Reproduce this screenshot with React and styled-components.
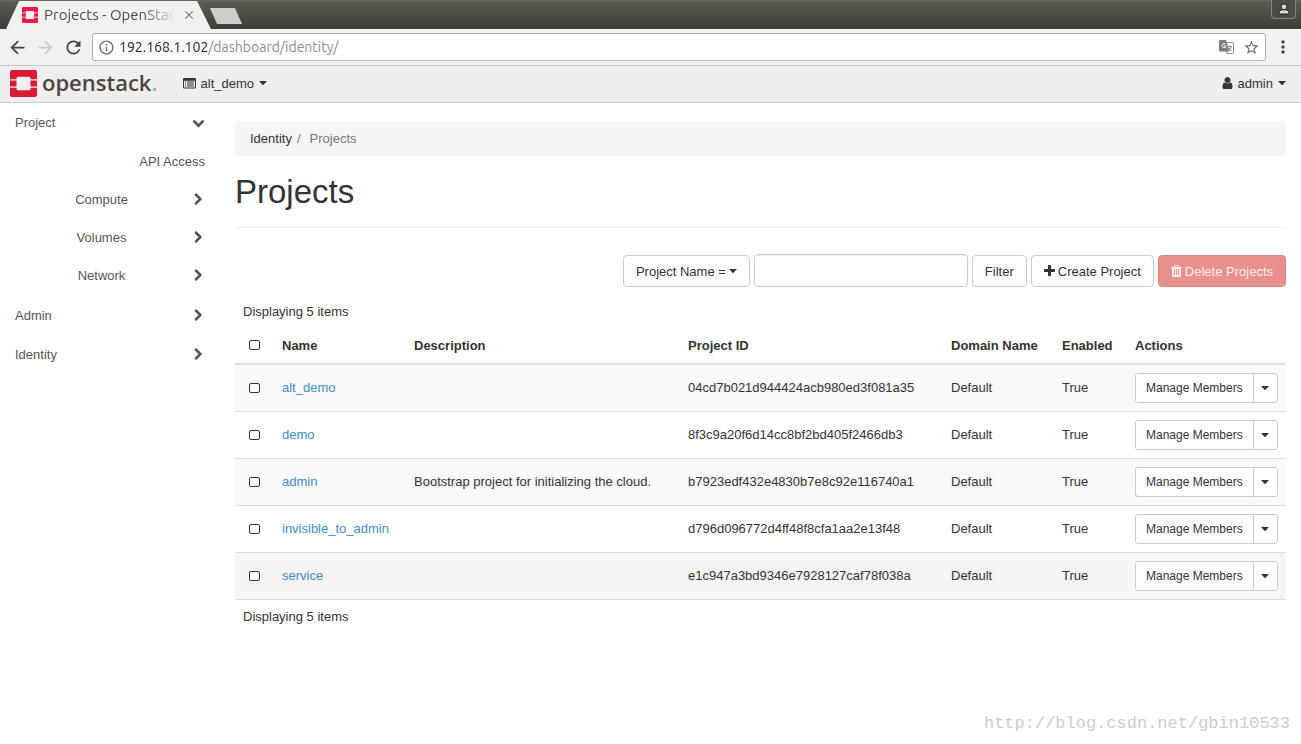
import React from "react";
import styled, { createGlobalStyle, css } from "styled-components";
import {
  MdArrowBack,
  MdArrowForward,
  MdClose,
  MdInfoOutline,
  MdMoreVert,
  MdRefresh,
  MdStarBorder,
} from "react-icons/md";

const projects = [
  { name: "alt_demo", description: "", id: "04cd7b021d944424acb980ed3f081a35" },
  { name: "demo", description: "", id: "8f3c9a20f6d14cc8bf2bd405f2466db3" },
  {
    name: "admin",
    description: "Bootstrap project for initializing the cloud.",
    id: "b7923edf432e4830b7e8c92e116740a1",
  },
  { name: "invisible_to_admin", description: "", id: "d796d096772d4ff48f8cfa1aa2e13f48" },
  { name: "service", description: "", id: "e1c947a3bd9346e7928127caf78f038a", active: true },
];

const GlobalStyle = createGlobalStyle`
  * { box-sizing: border-box; }
  body {
    margin: 0;
    background: #fff;
    color: #333;
    font: 13px/19px "Liberation Sans", Arial, sans-serif;
  }
  button, input { font: inherit; color: inherit; }
  button { cursor: pointer; }
  a { color: inherit; text-decoration: none; }
  svg { display: block; flex: none; }
`;

const Page = styled.div`
  display: flex;
  flex-direction: column;
  min-height: 100vh;
`;

/* ---------- browser chrome ---------- */

const TabStrip = styled.div`
  display: flex;
  align-items: flex-start;
  height: 29px;
  padding: 0 5px 0 6px;
  background: linear-gradient(#6b6957 0, #5b5a51 2px, #3d3c37 100%);
`;

const Tab = styled.div`
  display: flex;
  align-items: center;
  width: 205px;
  height: 28px;
  margin-top: 1px;
  padding: 0 15px 0 16px;
  background: #f2f1f0;
  clip-path: polygon(13px 0, calc(100% - 14px) 0, 100% 100%, 0 100%);
`;

const TabTitle = styled.span`
  flex: 1;
  margin: 0 6px;
  overflow: hidden;
  white-space: nowrap;
  color: #4c4c4c;
  font: 15px/20px Ubuntu, "Noto Sans", sans-serif;
  mask-image: linear-gradient(to right, #000 75%, transparent);
`;

const PlainButton = styled.button`
  display: flex;
  align-items: center;
  justify-content: center;
  padding: 0;
  border: 0;
  background: none;
  color: ${(props) => props.$color || "#444"};
`;

const NewTab = styled.button`
  width: 32px;
  height: 16px;
  margin: 8px 0 0 -1px;
  padding: 0;
  border: 0;
  background: #cfcecd;
  clip-path: polygon(0 0, 25px 0, 100% 100%, 7px 100%);
`;

const ProfileButton = styled.button`
  display: flex;
  align-items: center;
  justify-content: center;
  width: 25px;
  height: 19px;
  margin-left: auto;
  padding: 0;
  border: 1px solid #85837b;
  border-top: 0;
  border-radius: 0 0 4px 4px;
  background: #4d4c46;
`;

const Toolbar = styled.div`
  display: flex;
  align-items: center;
  gap: 7px;
  height: 37px;
  padding: 0 8px 0 7px;
  background: #f2f1f0;
  border-bottom: 1px solid #c9c8c7;
`;

const AddressBar = styled.div`
  display: flex;
  align-items: center;
  flex: 1;
  gap: 9px;
  height: 28px;
  margin-left: 1px;
  padding: 0 5px;
  border: 1px solid #b0afae;
  border-radius: 3px;
  background: #fff;
  color: #6e6e6e;
`;

const Url = styled.span`
  flex: 1;
  margin-left: -5px;
  color: #8c8c8c;
  font: 14px/20px Ubuntu, "Noto Sans", sans-serif;
  b { font-weight: 400; color: #222; }
`;

/* ---------- dashboard ---------- */

const Navbar = styled.header`
  display: flex;
  align-items: center;
  justify-content: space-between;
  height: 37px;
  padding: 0 15px 2px 10px;
  background: #eee;
  border-bottom: 1px solid #ccc;
`;

const NavGroup = styled.div`
  display: flex;
  align-items: center;
  gap: 25px;
`;

const Brand = styled.a`
  display: flex;
  align-items: center;
  gap: 5px;
  color: #4f4540;
  font: 600 22px/26px "Open Sans", "Noto Sans", sans-serif;
  span { margin-top: -2px; }
  i { color: #aaa; font-style: normal; }
`;

const NavButton = styled.button`
  display: flex;
  align-items: center;
  gap: 5px;
  padding: 0;
  border: 0;
  background: none;
`;

const Body = styled.div`
  display: flex;
  align-items: flex-start;
`;

const Sidebar = styled.nav`
  flex: none;
  width: 220px;
`;

const NavList = styled.ul`
  margin: 0;
  padding: 0;
  list-style: none;
  > li + li { margin-top: 1px; }
`;

const SubList = styled.ul`
  margin: 0;
  padding: 1px 0;
  list-style: none;
`;

const sideItem = css`
  display: flex;
  align-items: center;
  gap: 4px;
  width: 100%;
  height: 38px;
  padding: 0 15px;
  border: 0;
  background: none;
  color: #555;
`;

const SideButton = styled.button`
  ${sideItem}
  span {
    flex: 1;
    text-align: ${(props) => (props.$nested ? "center" : "left")};
  }
`;

const SideLink = styled.a`
  ${sideItem}
  justify-content: flex-end;
`;

const Main = styled.main`
  flex: 1;
  min-width: 0;
  padding: 18px 15px;
`;

const Breadcrumb = styled.ol`
  display: flex;
  margin: 0;
  padding: 8px 15px;
  border-radius: 4px;
  background: #f5f5f5;
  list-style: none;
  li + li { color: #777; }
  li + li::before { content: "/"; padding: 0 9px 0 5px; }
`;

const Title = styled.h1`
  margin: 0;
  padding: 18px 0 17px;
  border-bottom: 1px solid #eee;
  font-size: 33px;
  font-weight: 400;
  line-height: 36px;
`;

const Actions = styled.div`
  display: flex;
  align-items: flex-end;
  justify-content: flex-end;
  gap: 4px;
  margin: 26px 0 15px;
`;

const Button = styled.button`
  display: flex;
  align-items: center;
  gap: 3px;
  height: 32px;
  padding: 0 12px;
  border: 1px solid ${(props) => (props.$danger ? "#e08581" : "#ccc")};
  border-radius: 4px;
  background: ${(props) => (props.$danger ? "#e8908d" : "#fff")};
  color: ${(props) => (props.$danger ? "#fbeeee" : "#333")};
  white-space: nowrap;
`;

const SearchInput = styled.input`
  width: 214px;
  height: 33px;
  padding: 6px 12px;
  border: 1px solid #ccc;
  border-radius: 4px;
  box-shadow: inset 0 1px 1px rgba(0, 0, 0, 0.075);
`;

const Count = styled.p`
  margin: 0;
  padding: 0 8px;
`;

const Table = styled.table`
  width: 100%;
  margin: 6px 0 7px;
  border-collapse: collapse;
  table-layout: fixed;
`;

const Col = styled.col`
  width: ${(props) => props.$width};
`;

const HeadCell = styled.th`
  height: 37px;
  padding: 0 8px;
  border-bottom: 2px solid #ddd;
  text-align: ${(props) => (props.$center ? "center" : "left")};
`;

const Row = styled.tr`
  height: 47px;
  background: ${(props) => (props.$active ? "#f5f5f5" : "#fff")};
  &:nth-child(odd) { background: ${(props) => (props.$active ? "#f5f5f5" : "#f9f9f9")}; }
`;

const Cell = styled.td`
  padding: 0 8px;
  border-bottom: 1px solid #ddd;
  text-align: ${(props) => (props.$center ? "center" : "left")};
  a { color: #428bca; }
`;

const Checkbox = styled.input.attrs({ type: "checkbox" })`
  appearance: none;
  display: block;
  width: 11px;
  height: 10px;
  margin: 0 auto;
  border: 1px solid #333;
  border-radius: 2px;
  background: #fff;
`;

const ButtonGroup = styled.div`
  display: flex;
  width: max-content;
`;

const SmallButton = styled.button`
  display: flex;
  align-items: center;
  height: 30px;
  padding: 1px 10px 0;
  border: 1px solid #ccc;
  border-radius: 3px 0 0 3px;
  background: #fff;
  font-size: 12px;
`;

const ToggleButton = styled(SmallButton)`
  justify-content: center;
  width: 25px;
  margin-left: -1px;
  padding: 0;
  border-radius: 0 3px 3px 0;
`;

const Footer = styled.footer`
  margin-top: auto;
  padding: 10px 11px;
  color: #cdcdc8;
  font: 17px/20px "Liberation Mono", monospace;
  text-align: right;
`;

/* ---------- icons ---------- */

const glyphs = {
  right:
    "M1363 877l-742 742q-19 19-45 19t-45-19l-166-166q-19-19-19-45t19-45l531-531-531-531q-19-19-19-45t19-45l166-166q19-19 45-19t45 19l742 742q19 19 19 45t-19 45z",
  down:
    "M1683 808l-742 741q-19 19-45 19t-45-19l-742-741q-19-19-19-45.500t19-45.500l166-165q19-19 45-19t45 19l531 531 531-531q19-19 45-19t45 19l166 165q19 19 19 45.500t-19 45.500z",
  user:
    "M1536 1399q0 109-62.500 187t-150.500 78h-854q-88 0-150.500-78t-62.500-187q0-85 8.500-160.500t31.500-152 58.500-131 94-89 134.500-34.500q131 128 313 128t313-128q76 0 134.500 34.500t94 89 58.500 131 31.500 152 8.500 160.500zm-256-887q0 159-112.500 271.500t-271.500 112.500-271.500-112.500-112.500-271.500 112.500-271.500 271.500-112.500 271.500 112.500 112.500 271.500z",
  plus:
    "M1600 736v192q0 40-28 68t-68 28h-416v416q0 40-28 68t-68 28h-192q-40 0-68-28t-28-68v-416h-416q-40 0-68-28t-28-68v-192q0-40 28-68t68-28h416v-416q0-40 28-68t68-28h192q40 0 68 28t28 68v416h416q40 0 68 28t28 68z",
  trash:
    "M704 1376v-704q0-14-9-23t-23-9h-64q-14 0-23 9t-9 23v704q0 14 9 23t23 9h64q14 0 23-9t9-23zm256 0v-704q0-14-9-23t-23-9h-64q-14 0-23 9t-9 23v704q0 14 9 23t23 9h64q14 0 23-9t9-23zm256 0v-704q0-14-9-23t-23-9h-64q-14 0-23 9t-9 23v704q0 14 9 23t23 9h64q14 0 23-9t9-23zm-544-992h448l-48-117q-7-9-17-11h-317q-10 2-17 11zm928 32v64q0 14-9 23t-23 9h-96v948q0 83-47 143.500t-113 60.500h-832q-66 0-113-58.500t-47-141.500v-952h-96q-14 0-23-9t-9-23v-64q0-14 9-23t23-9h309l70-167q15-37 54-63t79-26h320q40 0 79 26t54 63l70 167h309q14 0 23 9t9 23z",
};

function Glyph({ name, size = 13 }) {
  return (
    <svg width={size} height={size} viewBox="0 0 1792 1792" fill="currentColor" aria-hidden="true">
      <path d={glyphs[name]} />
    </svg>
  );
}

// plus, trash and user are narrower than the square em box
function NarrowGlyph({ name }) {
  return (
    <svg width="11" height="14" viewBox="192 0 1408 1792" fill="currentColor" aria-hidden="true">
      <path d={glyphs[name]} />
    </svg>
  );
}

function Caret() {
  return (
    <svg width="8" height="4" viewBox="0 0 8 4" fill="currentColor" aria-hidden="true">
      <path d="M0 0h8L4.300 3.900q-.3.200-.6 0z" />
    </svg>
  );
}

function ListIcon() {
  return (
    <svg width="13" height="11" viewBox="0 0 13 11" fill="currentColor" aria-hidden="true">
      <path
        fillRule="evenodd"
        d="M1.200 0h10.600q1.200 0 1.200 1.200v8.100q0 1.200-1.200 1.200H1.200Q0 10.500 0 9.300V1.200Q0 0 1.200 0zM1 2.700v6.500q0 .3.300.3h10.400q.3 0 .3-.3V2.700z"
      />
      <path d="M2 3.500h1v1H2zM4 3.500h7v1H4zM2 5.500h1v1H2zM4 5.500h7v1H4zM2 7.500h1v1H2zM4 7.500h7v1H4z" />
    </svg>
  );
}

function OpenStackMark({ size, color }) {
  return (
    <svg width={size} height={size} viewBox="0 0 27 27" fill={color} aria-hidden="true">
      <path d="M2 0h23q2 0 2 2v7.200h-6.500V8.200q0-1.500-1.500-1.500H8Q6.500 6.700 6.500 8.200v1H0V2q0-2 2-2z" />
      <path d="M2 27h23q2 0 2-2v-7.200h-6.500v1q0 1.500-1.500 1.500H8q-1.500 0-1.500-1.500v-1H0V25q0 2 2 2z" />
      <path d="M0 10.400h6.500v6.200H0zM20.500 10.400H27v6.200h-6.500z" />
    </svg>
  );
}

function TranslateIcon() {
  return (
    <svg width="15" height="15" viewBox="0 0 15 15" aria-hidden="true">
      <path d="M6 2.500h7.500q1 0 1 1v9q0 1-1 1H8z" fill="#fff" stroke="#8a8a8a" />
      <path d="M1 0h6l3.500 11.500H1q-1 0-1-1V1q0-1 1-1z" fill="#7d7d7d" />
      <path d="M6.500 4.200A2 2 0 1 0 7 6H5" fill="none" stroke="#fff" />
      <path d="M8.800 6.500h4.400M11 5.500v1M12.300 6.500Q12 9 9.800 11M9.800 8l2.900 3" fill="none" stroke="#8a8a8a" />
    </svg>
  );
}

function ProfileIcon() {
  return (
    <svg width="12" height="12" viewBox="0 0 12 12" fill="#d8d7d2" stroke="#24231f" aria-hidden="true">
      <path d="M1 11V9.500Q1.200 7 4.200 6.800h3.600q3 .2 3.200 2.700V11z" />
      <circle cx="6" cy="3.800" r="2.900" />
    </svg>
  );
}

/* ---------- sections ---------- */

function Browser() {
  return (
    <>
      <TabStrip>
        <Tab>
          <OpenStackMark size={16} color="#ed1944" />
          <TabTitle>Projects - OpenStack</TabTitle>
          <PlainButton aria-label="Close tab" $color="#777"><MdClose size={14} /></PlainButton>
        </Tab>
        <NewTab aria-label="New tab" />
        <ProfileButton aria-label="Profile"><ProfileIcon /></ProfileButton>
      </TabStrip>
      <Toolbar>
        <PlainButton aria-label="Back"><MdArrowBack size={21} /></PlainButton>
        <PlainButton aria-label="Forward" $color="#cbcac9"><MdArrowForward size={21} /></PlainButton>
        <PlainButton aria-label="Reload"><MdRefresh size={21} /></PlainButton>
        <AddressBar>
          <MdInfoOutline size={17} />
          <Url><b>192.168.1.102</b>/dashboard/identity/</Url>
          <PlainButton aria-label="Translate"><TranslateIcon /></PlainButton>
          <PlainButton aria-label="Bookmark" $color="#6e6e6e"><MdStarBorder size={17} /></PlainButton>
        </AddressBar>
        <PlainButton aria-label="Menu"><MdMoreVert size={20} /></PlainButton>
      </Toolbar>
    </>
  );
}

function SideNav() {
  return (
    <Sidebar>
      <NavList>
        <li>
          <SideButton><span>Project</span><Glyph name="down" /></SideButton>
          <SubList>
            <li><SideLink href="#api">API Access</SideLink></li>
            {["Compute", "Volumes", "Network"].map((item) => (
              <li key={item}>
                <SideButton $nested><span>{item}</span><Glyph name="right" /></SideButton>
              </li>
            ))}
          </SubList>
        </li>
        {["Admin", "Identity"].map((item) => (
          <li key={item}>
            <SideButton><span>{item}</span><Glyph name="right" /></SideButton>
          </li>
        ))}
      </NavList>
    </Sidebar>
  );
}

function ProjectTable() {
  return (
    <Table>
      <colgroup>
        <Col $width="39px" />
        <Col $width="132px" />
        <Col />
        <Col $width="263px" />
        <Col $width="111px" />
        <Col $width="73px" />
        <Col $width="159px" />
      </colgroup>
      <thead>
        <tr>
          <HeadCell $center><Checkbox aria-label="Select all" /></HeadCell>
          <HeadCell>Name</HeadCell>
          <HeadCell>Description</HeadCell>
          <HeadCell>Project ID</HeadCell>
          <HeadCell>Domain Name</HeadCell>
          <HeadCell>Enabled</HeadCell>
          <HeadCell>Actions</HeadCell>
        </tr>
      </thead>
      <tbody>
        {projects.map((item) => (
          <Row key={item.id} $active={item.active}>
            <Cell $center><Checkbox aria-label={`Select ${item.name}`} /></Cell>
            <Cell><a href={`#${item.name}`}>{item.name}</a></Cell>
            <Cell>{item.description}</Cell>
            <Cell>{item.id}</Cell>
            <Cell>Default</Cell>
            <Cell>True</Cell>
            <Cell>
              <ButtonGroup>
                <SmallButton>Manage Members</SmallButton>
                <ToggleButton aria-label="More actions"><Caret /></ToggleButton>
              </ButtonGroup>
            </Cell>
          </Row>
        ))}
      </tbody>
    </Table>
  );
}

export default function App() {
  return (
    <Page>
      <GlobalStyle />
      <Browser />
      <Navbar>
        <NavGroup>
          <Brand href="#home">
            <OpenStackMark size={27} color="#da1a32" />
            <span>openstack<i>.</i></span>
          </Brand>
          <NavButton><ListIcon />alt_demo <Caret /></NavButton>
        </NavGroup>
        <NavButton><NarrowGlyph name="user" />admin <Caret /></NavButton>
      </Navbar>
      <Body>
        <SideNav />
        <Main>
          <Breadcrumb>
            <li><a href="#identity">Identity</a></li>
            <li>Projects</li>
          </Breadcrumb>
          <Title>Projects</Title>
          <Actions>
            <Button>Project Name = <Caret /></Button>
            <SearchInput type="text" aria-label="Project Name" />
            <Button>Filter</Button>
            <Button><NarrowGlyph name="plus" />Create Project</Button>
            <Button $danger><NarrowGlyph name="trash" />Delete Projects</Button>
          </Actions>
          <Count>Displaying 5 items</Count>
          <ProjectTable />
          <Count>Displaying 5 items</Count>
        </Main>
      </Body>
      <Footer>http://blog.csdn.net/gbin10533</Footer>
    </Page>
  );
}
